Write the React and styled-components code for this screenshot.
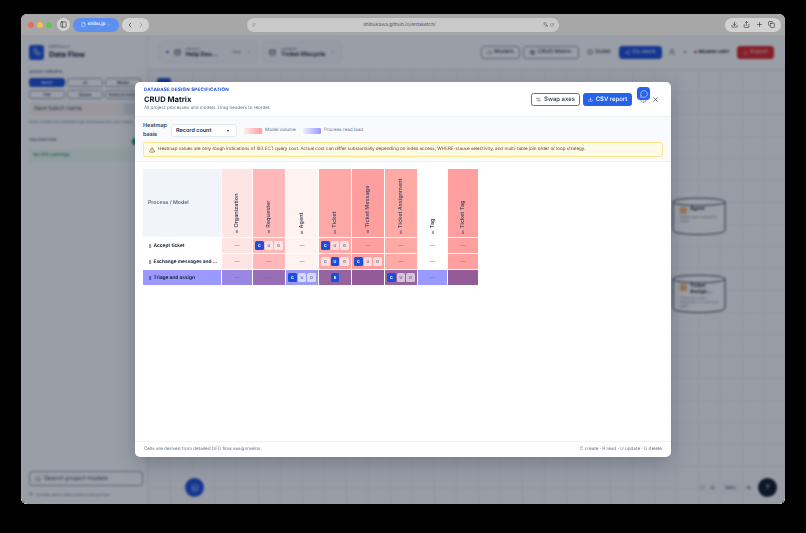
import React from 'react';
import styled, { createGlobalStyle } from 'styled-components';
import {
  PanelLeft, File, ChevronDown, ChevronLeft, ChevronRight, Download, Share, Plus, Copy, RotateCw, AlignLeft,
  Search, Grid3x3, CircleHelp, Share2, Users, Upload, Database, Workflow, ArrowLeftRight, X, MessageCircle,
  TriangleAlert, GripVertical, Maximize, ZoomIn, ZoomOut, Layers, Languages
} from 'lucide-react';

const Global = createGlobalStyle`
  html, body { margin: 0; background: #000; }
  body { font-family: Inter, "Liberation Sans", sans-serif; text-rendering: geometricPrecision; -webkit-font-smoothing: antialiased; }
  * { box-sizing: border-box; }
`;

const Page = styled.div`
  width: 806px; height: 533px; background: #000; padding: 14px 21px 29px; overflow: hidden; filter: blur(0.3px);
`;
const Win = styled.div`
  width: 764px; height: 490px; border-radius: 6px; overflow: hidden; display: flex; flex-direction: column; background: #fff;
`;
const Chrome = styled.div`
  height: 21px; flex: none; background: #a7a7a7; display: flex; align-items: center; padding: 0 4px 0 7px; color: #2b2b2b;
`;
const Light = styled.span`
  width: 6px; height: 6px; border-radius: 50%; background: ${p => p.$c}; margin-right: 3px;
`;
const RoundBtn = styled.span`
  width: 13px; height: 13px; border-radius: 50%; background: #d4d4d4; display: flex; align-items: center; justify-content: center; margin-left: 2px; margin-right: 3px;
`;
const SitePill = styled.span`
  width: 46px; height: 14px; border-radius: 7px; background: #5b8ff0; color: #f3f6ff; display: flex; align-items: center; justify-content: center; gap: 2px; font-size: 4.6px; font-weight: 600; margin-right: 3px;
`;
const NavPill = styled.span`
  width: 27px; height: 14px; border-radius: 7px; background: #d2d2d2; display: flex; align-items: center; justify-content: space-around; padding: 0 2px;
`;
const Address = styled.div`
  width: 312px; height: 14px; border-radius: 7px; background: #c9c9c9; margin-left: 98px; display: flex; align-items: center; justify-content: space-between; padding: 0 5px; font-size: 4.9px; color: #555;
`;
const AddressEnd = styled.span`
  display: flex; align-items: center; gap: 2px; color: #555;
`;
const RightPill = styled.div`
  width: 56px; height: 14px; border-radius: 7px; background: #d2d2d2; margin-left: auto; display: flex; align-items: center; justify-content: space-around; padding: 0 3px;
`;

const Frame = styled.div`
  position: relative; flex: 1; display: flex; min-height: 0; background: #fbfbfd; color: #1e293b;
`;
const Side = styled.aside`
  width: 127px; flex: none; background: #fff; border-right: 1px solid #e8eaf0; padding: 9px 7px 0 8px; display: flex; flex-direction: column;
`;
const Brand = styled.div`
  display: flex; gap: 5px; align-items: center; margin-bottom: 9px;
`;
const BrandMark = styled.div`
  width: 15px; height: 15px; border-radius: 3px; background: #1d4ed8; color: #dbeafe; display: flex; align-items: center; justify-content: center;
`;
const BrandSmall = styled.div`
  font-size: 4px; color: #64748b; line-height: 6px;
`;
const BrandBig = styled.div`
  font-size: 7.5px; font-weight: 700; line-height: 10px;
`;
const Label = styled.div`
  font-size: 4px; font-weight: 700; letter-spacing: .3px; color: #64748b; line-height: 6px; margin-bottom: 3px;
`;
const QuickGrid = styled.div`
  display: grid; grid-template-columns: repeat(3, 36px); gap: 3px 2px; margin-right: -6px; margin-bottom: 4px;
`;
const Quick = styled.div`
  height: 9px; border-radius: 2.5px; font-size: 4px; font-weight: 600; display: flex; align-items: center; justify-content: center; white-space: nowrap; overflow: hidden;
  background: ${p => p.$on ? '#1d4ed8' : '#fff'}; color: ${p => p.$on ? '#dbeafe' : '#334155'}; border: 1px solid ${p => p.$on ? '#1d4ed8' : '#94a3b8'};
`;
const BatchRow = styled.div`
  height: 12px; display: flex; background: #fdf2f2; border-radius: 2px; overflow: hidden; margin-bottom: 3px; margin-right: -4px;
`;
const BatchInput = styled.div`
  flex: 1; font-size: 6px; color: #475569; padding: 0 5px; line-height: 12px;
`;
const BatchAdd = styled.div`
  width: 20px; background: #e5e7eb;
`;
const Hint = styled.div`
  font-size: 3.8px; color: #64748b; line-height: 7px; margin-bottom: 12px;
`;
const ValHead = styled.div`
  display: flex; justify-content: space-between; align-items: center; margin-right: -6px; margin-bottom: 3px;
`;
const ValBadge = styled.span`
  width: 14px; height: 7px; border-radius: 4px; background: #059669;
`;
const ValBox = styled.div`
  height: 13px; background: #ecfdf5; font-size: 4.4px; color: #047857; line-height: 13px; padding-left: 4px; margin-right: -4px;
`;
const SideSpacer = styled.div`
  flex: 1;
`;
const SearchBox = styled.div`
  height: 15px; border: 1px solid #94a3b8; border-radius: 3px; display: flex; align-items: center; gap: 3px; padding: 0 5px; font-size: 6px; color: #475569; margin-bottom: 5px; margin-right: -3px; background: #fff;
`;
const Overlap = styled.div`
  display: flex; align-items: center; gap: 3px; height: 6px; font-size: 3.8px; color: #64748b; margin-bottom: 7px;
`;

const Main = styled.main`
  flex: 1; display: flex; flex-direction: column; min-width: 0;
`;
const TopBar = styled.div`
  height: 35px; flex: none; border-bottom: 1px solid #e8eaf0; background: #fff; display: flex; align-items: center; padding: 0 11px;
`;
const Crumb = styled.div`
  height: 22px; border: 1px solid #eef0f4; border-radius: 5px; display: flex; align-items: center; gap: 5px; padding: 0 6px; width: ${p => p.$w}px; margin-right: 4px; background: #fafafc;
`;
const Dot = styled.span`
  width: 2.5px; height: 2.5px; border-radius: 50%; background: ${p => p.$c}; flex: none;
`;
const CrumbText = styled.div`
  flex: 1; min-width: 0; font-weight: 700; font-size: 6px; line-height: 7px; white-space: nowrap;
  small { display: block; font-size: 3.2px; font-weight: 600; color: #64748b; line-height: 4px; }
`;
const Tiny = styled.span`
  font-size: 3.5px; color: #475569;
`;
const TopSpacer = styled.div`
  flex: 1;
`;
const TopBtn = styled.div`
  height: 13px; border-radius: 3px; display: flex; align-items: center; justify-content: center; gap: 2px; font-size: 5.5px; font-weight: 500; width: ${p => p.$w}px; margin-left: ${p => p.$ml || 0}px;
  background: ${p => p.$bg || '#fff'}; color: ${p => p.$fg || '#334155'}; border: ${p => p.$plain ? 'none' : `1px solid ${p.$bd || '#94a3b8'}`};
`;
const Presence = styled.div`
  display: flex; align-items: center; gap: 2px; font-size: 4.6px; font-weight: 700; color: #1e293b; white-space: nowrap; margin-left: ${p => p.$ml || 0}px;
`;
const Canvas = styled.div`
  position: relative; flex: 1; background-color: #fcfcfe;
  background-image: linear-gradient(#f1f2f6 1px, transparent 1px), linear-gradient(90deg, #f1f2f6 1px, transparent 1px);
  background-size: 22px 22px;
`;
const TabIcon = styled.div`
  position: absolute; left: 9px; top: 8px; width: 14px; height: 14px; background: #1d4ed8; border-radius: 3px;
`;
const NodeBox = styled.div`
  position: absolute; left: ${p => p.$x}px; top: ${p => p.$y}px; width: 54px; height: ${p => p.$h}px;
`;
const NodeSvg = styled.svg`
  position: absolute; inset: 0; width: 100%; height: 100%;
`;
const NodeBody = styled.div`
  position: absolute; left: 8px; right: 4px; top: 9px; display: grid; grid-template-columns: 7px 1fr; gap: 0 3px; color: #1e293b;
`;
const NodeIcon = styled.span`
  width: 7px; height: 7px; border-radius: 1.5px; background: #fdba74; margin-top: 1px;
`;
const NodeTitle = styled.div`
  font-size: 5px; font-weight: 700; line-height: 6px; 
`;
const NodeDesc = styled.div`
  grid-column: 1 / 3; font-size: 3px; line-height: 4px; color: #64748b; margin-top: 1px;
`;
const Fab = styled.div`
  position: absolute; left: 37px; bottom: 7px; width: 19px; height: 19px; border-radius: 50%; background: #1d4ed8; color: #bfdbfe; display: flex; align-items: center; justify-content: center;
`;
const ZoomBar = styled.div`
  position: absolute; right: 8px; bottom: 7px; display: flex; align-items: center; color: #475569; gap: 5px;
`;
const ZoomVal = styled.span`
  font-size: 3.8px; font-weight: 700; width: 21px; height: 9px; line-height: 9px; text-align: center; background: #f5f6f9; border-radius: 2px;
`;
const HelpFab = styled.div`
  width: 19px; height: 19px; border-radius: 50%; background: #0f172a; color: #cbd5e1; font-size: 6px; font-weight: 700; display: flex; align-items: center; justify-content: center; margin-left: 2px;
`;

const Scrim = styled.div`
  position: absolute; inset: 0; background: rgba(15, 23, 42, .42); backdrop-filter: blur(1px); display: flex; align-items: center; justify-content: center;
`;
const Modal = styled.div`
  position: relative; width: 536px; height: 375px; background: #fff; border-radius: 5px; display: flex; flex-direction: column; overflow: hidden; box-shadow: 0 6px 20px rgba(15,23,42,.25);
`;
const Head = styled.div`
  height: 35px; flex: none; display: flex; align-items: flex-start; padding: 6px 0 0 9px; border-bottom: 1px solid #eef1f5;
`;
const Eyebrow = styled.div`
  font-size: 4.6px; font-weight: 700; letter-spacing: .2px; color: #1d4ed8; line-height: 6px;
`;
const Title = styled.div`
  font-size: 7.6px; font-weight: 700; color: #0f172a; line-height: 11px;
`;
const Sub = styled.div`
  font-size: 4.55px; color: #64748b; line-height: 7px;
`;
const HeadActions = styled.div`
  margin-left: auto; display: flex; align-items: center; padding-top: 5px; padding-right: 12px;
`;
const ActionBtn = styled.div`
  height: 13px; width: 49px; border-radius: 2.5px; display: flex; align-items: center; justify-content: center; gap: 3px; font-size: 6px; font-weight: 500; margin-right: 3px;
  background: ${p => p.$primary ? '#2563eb' : '#fff'}; color: ${p => p.$primary ? '#fff' : '#334155'}; border: 1px solid ${p => p.$primary ? '#2563eb' : '#64748b'};
`;
const IconSlot = styled.div`
  display: flex; align-items: center; color: #475569; margin-left: ${p => p.$ml || 0}px;
`;
const Bubble = styled.div`
  position: absolute; left: 502px; top: 5px; width: 13px; height: 13px; border-radius: 3.5px; background: #2563eb; color: #e0e7ff; display: flex; align-items: center; justify-content: center;
`;
const Tools = styled.div`
  height: 45px; flex: none; background: #f8fafc; border-bottom: 1px solid #eef1f5; padding: 2px 8px 0;
`;
const ToolRow = styled.div`
  height: 23px; display: flex; align-items: center;
`;
const BasisLabel = styled.div`
  font-size: 5.5px; font-weight: 600; color: #334155; line-height: 8.5px; width: 28px;
`;
const Select = styled.div`
  width: 66px; height: 13px; background: #fff; border: 1px solid #e2e8f0; border-radius: 2.5px; display: flex; align-items: center; justify-content: space-between; padding: 0 7px 0 4px; font-size: 5.5px; font-weight: 600; color: #1e293b; margin-right: 7px;
`;
const Caret = styled.span`
  width: 0; height: 0; border-left: 1.5px solid transparent; border-right: 1.5px solid transparent; border-top: 2px solid #1e293b;
`;
const Swatch = styled.span`
  width: 18px; height: 6px; border-radius: 1px; background: linear-gradient(90deg, ${p => p.$from}, ${p => p.$to}); margin-right: 3px;
`;
const LegendText = styled.span`
  font-size: 4.6px; color: #64748b; margin-right: ${p => p.$mr || 0}px; width: ${p => p.$w}px; white-space: nowrap;
`;
const Notice = styled.div`
  height: 15px; background: #fefce8; border: 1px solid #fde68a; border-radius: 2.5px; display: flex; align-items: center; gap: 3px; padding-left: 5px; font-size: 4.55px; color: #713f12; white-space: nowrap;
`;
const Body = styled.div`
  flex: 1; padding: 7px 8px 0; min-height: 0;
`;
const Matrix = styled.table`
  border-collapse: separate; border-spacing: 0; table-layout: fixed; width: 336px;
`;
const HeadCorner = styled.th`
  width: 79px; height: 69px; background: #f1f5f9; font-size: 5.2px; font-weight: 700; color: #64748b; text-align: left; padding-left: 5px; border-right: 1px solid #fff; border-bottom: 1px solid #fff;
`;
const ColHead = styled.th`
  width: ${p => p.$w}px; height: 69px; padding: 0 0 3px; background: ${p => p.$bg}; border-right: 1px solid #fff; border-bottom: 1px solid #fff; vertical-align: bottom;
`;
const ColLabel = styled.div`
  writing-mode: vertical-rl; transform: rotate(180deg); margin: 0 auto; width: fit-content; font-size: 5.5px; font-weight: 600; color: #475569; display: flex; align-items: center; gap: 1.5px; white-space: nowrap;
`;
const RowHead = styled.th`
  height: 16px; background: ${p => p.$bg}; font-size: 4.8px; font-weight: 700; color: #1e293b; text-align: left; padding: 0 0 0 5px; border-right: 1px solid #fff; border-bottom: 1px solid #fff; white-space: nowrap;
`;
const RowLabel = styled.span`
  display: flex; align-items: center; gap: 1.5px;
`;
const Cell = styled.td`
  height: 16px; padding: 0; background: ${p => p.$bg}; border-right: 1px solid #fff; border-bottom: 1px solid #fff; text-align: center; font-size: 5px; color: #64748b;
`;
const Badges = styled.div`
  display: flex; align-items: center; justify-content: center; gap: 1.2px;
`;
const Badge = styled.span`
  width: 8.5px; height: 8.5px; border-radius: 1.5px; display: flex; align-items: center; justify-content: center; font-size: 3.8px; font-weight: 700;
  background: ${p => p.$on ? '#1d4ed8' : 'rgba(255,255,255,.62)'}; color: ${p => p.$on ? '#fff' : '#64748b'};
`;
const Foot = styled.div`
  height: 16px; flex: none; border-top: 1px solid #eef1f5; display: flex; justify-content: space-between; align-items: center; padding: 0 9px; font-size: 4.6px; color: #64748b;
`;

const cols = [
  ['Organization', 31, '#ffe4e4'], ['Requester', 33, '#ffb8b8'], ['Agent', 33, '#fff3f1'], ['Ticket', 33, '#ffa8a8'],
  ['Ticket Message', 33, '#ff9e9e'], ['Ticket Assignment', 33, '#ffa9a5'], ['Tag', 30, '#ffffff'], ['Ticket Tag', 31, '#ff9f9f'],
];
const rows = [
  { name: 'Accept ticket', bg: '#fff', cellBg: cols.map(c => c[2]), cells: [null, 'C', null, 'C', null, null, null, null] },
  { name: 'Exchange messages and ...', bg: '#fff', cellBg: cols.map(c => c[2]), cells: [null, null, null, 'U', 'C', null, null, null] },
  { name: 'Triage and assign', bg: '#9b99ff', cellBg: ['#9a86e3', '#986fb5', '#9a98f5', '#96649f', '#945c96', '#96649f', '#9a99ff', '#945c96'], cells: [null, null, 'C', 'R', null, 'C', null, null] },
];

const CrudCell = ({ v }) => {
  if (!v) return '—';
  if (v === 'R') return <Badges><Badge $on>R</Badge></Badges>;
  return <Badges>{['C', 'U', 'D'].map(l => <Badge key={l} $on={l === v}>{l}</Badge>)}</Badges>;
};

const Cylinder = () => (
  <NodeSvg viewBox="0 0 55 40" preserveAspectRatio="none">
    <path d="M1 5 C1 0 54 0 54 5 V34 C54 40 1 40 1 34 Z" fill="#fff" stroke="#334155" strokeWidth="1" />
    <path d="M1 5 C1 10 54 10 54 5" fill="none" stroke="#334155" strokeWidth="1" />
  </NodeSvg>
);

export default function App() {
  return (
    <Page>
      <Global />
      <Win>
        <Chrome>
          <Light $c="#ec6a5e" /><Light $c="#f4bf4f" /><Light $c="#61c554" />
          <RoundBtn><PanelLeft size={7} /></RoundBtn>
          <SitePill><File size={5} />shibu.jp<ChevronDown size={4} /></SitePill>
          <NavPill><ChevronLeft size={8} /><ChevronRight size={8} color="#8a8a8a" /></NavPill>
          <Address>
            <AlignLeft size={4} color="#777" />
            <span>shibukawa.github.io/erdsketch/</span>
            <AddressEnd><Languages size={5} /><RotateCw size={4} /></AddressEnd>
          </Address>
          <RightPill><Download size={7} /><Share size={7} /><Plus size={7} /><Copy size={7} /></RightPill>
        </Chrome>
        <Frame>
          <Side>
            <Brand>
              <BrandMark><Workflow size={8} /></BrandMark>
              <div><BrandSmall>ERDSketch</BrandSmall><BrandBig>Data Flow</BrandBig></div>
            </Brand>
            <Label>QUICK CREATE</Label>
            <QuickGrid>
              <Quick $on>Batch</Quick><Quick>UI</Quick><Quick>Model</Quick>
              <Quick>File</Quick><Quick>Queue</Quick><Quick>External entity</Quick>
            </QuickGrid>
            <BatchRow><BatchInput>New batch name</BatchInput><BatchAdd /></BatchRow>
            <Hint>Enter creates the selected type and keeps the input ready.</Hint>
            <ValHead><Label>VALIDATION</Label><ValBadge /></ValHead>
            <ValBox>No DFD warnings</ValBox>
            <SideSpacer />
            <SearchBox><Search size={6} />Search project models</SearchBox>
            <Overlap><Layers size={4} />Overlap same-class nodes to group them</Overlap>
          </Side>
          <Main>
            <TopBar>
              <Crumb $w={99}><Dot $c="#2563eb" /><Database size={7} /><CrumbText><small>PROJECT</small>Help Des...</CrumbText><Tiny>Temp</Tiny><ChevronDown size={5} /></Crumb>
              <Crumb $w={80}><Database size={7} /><CrumbText><small>DIAGRAM</small>Ticket lifecycle</CrumbText><ChevronDown size={5} /></Crumb>
              <TopSpacer />
              <TopBtn $w={39}><Search size={5} />Models</TopBtn>
              <TopBtn $w={56} $ml={3}><Grid3x3 size={5} />CRUD Matrix</TopBtn>
              <TopBtn $w={28} $ml={6} $plain $bg="transparent"><CircleHelp size={6} />Guide</TopBtn>
              <TopBtn $w={43} $ml={6} $bg="#1d4ed8" $fg="#dbeafe" $bd="#1d4ed8"><Share2 size={5} />Co-work</TopBtn>
              <IconSlot $ml={7}><Users size={6} /></IconSlot>
              <IconSlot $ml={9}><Dot $c="#059669" /></IconSlot>
              <Presence $ml={8}><Dot $c="#e11d48" />Modeler edit1</Presence>
              <TopBtn $w={37} $ml={8} $bg="#dc2626" $fg="#fecaca" $bd="#dc2626"><Upload size={5} />Export</TopBtn>
            </TopBar>
            <Canvas>
              <TabIcon />
              <NodeBox $x={524} $y={127} $h={39}>
                <Cylinder />
                <NodeBody><NodeIcon /><NodeTitle>Agent</NodeTitle><NodeDesc>Support agent assigned to tickets</NodeDesc></NodeBody>
              </NodeBox>
              <NodeBox $x={524} $y={204} $h={40}>
                <Cylinder />
                <NodeBody><NodeIcon /><NodeTitle>Ticket Assign...</NodeTitle><NodeDesc>Tracks the current assignment of a ticket to an agent</NodeDesc></NodeBody>
              </NodeBox>
              <Fab><Layers size={8} /></Fab>
              <ZoomBar>
                <Maximize size={5} /><ZoomOut size={5} /><ZoomVal>100%</ZoomVal><ZoomIn size={5} /><HelpFab>?</HelpFab>
              </ZoomBar>
            </Canvas>
          </Main>
          <Scrim>
            <Modal>
              <Head>
                <div>
                  <Eyebrow>DATABASE DESIGN SPECIFICATION</Eyebrow>
                  <Title>CRUD Matrix</Title>
                  <Sub>All project processes and models. Drag headers to reorder.</Sub>
                </div>
                <HeadActions>
                  <ActionBtn><ArrowLeftRight size={5} />Swap axes</ActionBtn>
                  <ActionBtn $primary><Download size={5} />CSV report</ActionBtn>
                  <IconSlot $ml={5}><CircleHelp size={7} /></IconSlot>
                  <IconSlot $ml={5}><X size={7} strokeWidth={3} /></IconSlot>
                </HeadActions>
              </Head>
              <Bubble><MessageCircle size={8} /></Bubble>
              <Tools>
                <ToolRow>
                  <BasisLabel>Heatmap basis</BasisLabel>
                  <Select>Record count<Caret /></Select>
                  <Swatch $from="#ffecec" $to="#ff9d9d" />
                  <LegendText $w={35} $mr={3}>Model volume</LegendText>
                  <Swatch $from="#eeeeff" $to="#9a99ff" />
                  <LegendText $w={50}>Process read load</LegendText>
                </ToolRow>
                <Notice><TriangleAlert size={6} />Heatmap values are only rough indications of SELECT query cost. Actual cost can differ substantially depending on index access, WHERE-clause selectivity, and multi-table join order or loop strategy.</Notice>
              </Tools>
              <Body>
                <Matrix>
                  <thead>
                    <tr>
                      <HeadCorner>Process / Model</HeadCorner>
                      {cols.map(([n, w, bg]) => (
                        <ColHead key={n} $w={w} $bg={bg}><ColLabel><GripVertical size={4} />{n}</ColLabel></ColHead>
                      ))}
                    </tr>
                  </thead>
                  <tbody>
                    {rows.map(r => (
                      <tr key={r.name}>
                        <RowHead $bg={r.bg}><RowLabel><GripVertical size={4} />{r.name}</RowLabel></RowHead>
                        {r.cells.map((v, i) => <Cell key={i} $bg={r.cellBg[i]}><CrudCell v={v} /></Cell>)}
                      </tr>
                    ))}
                  </tbody>
                </Matrix>
              </Body>
              <Foot>
                <span>Cells are derived from detailed DFD flow assignments.</span>
                <span>C create · R read · U update · D delete</span>
              </Foot>
            </Modal>
          </Scrim>
        </Frame>
      </Win>
    </Page>
  );
}
